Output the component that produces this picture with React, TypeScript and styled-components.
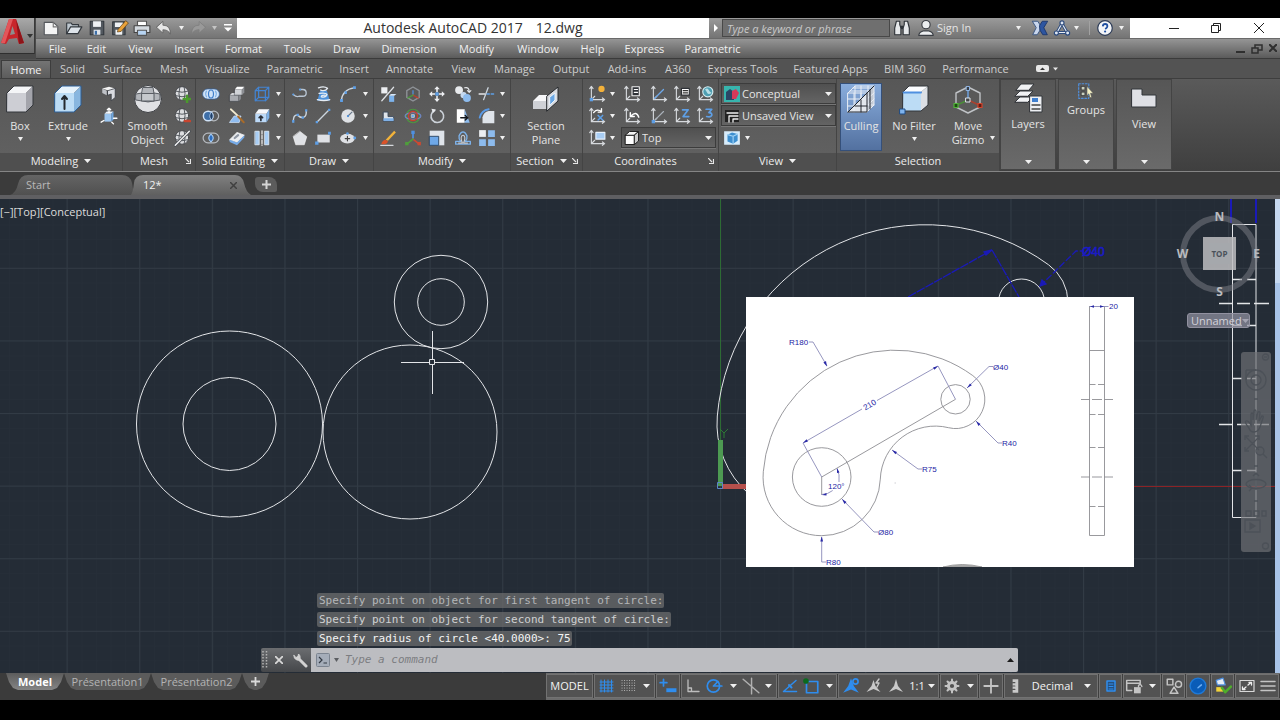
import React from "react";
import styled, { createGlobalStyle, css } from "styled-components";

const Global = createGlobalStyle`
  * { box-sizing: border-box; }
  body { margin: 0; background: #000; font-family: "Open Sans", "Noto Sans", sans-serif; font-size: 11px; line-height: 14px; color: #e4e4e4; }
  button, input, select { font: inherit; color: inherit; border: 0; margin: 0; padding: 0; background: none; border-radius: 0; }
  svg { display: block; flex: none; }
`;

/* ---------- frame ---------- */

const Frame = styled.div`
  min-height: 100vh;
  padding: 18px 0 20px;
  display: flex;
  flex-direction: column;
  overflow: hidden;
`;

const Header = styled.header`
  display: flex;
  background: #4a4a4a;
`;

const AppButton = styled.button`
  width: 35px;
  height: 36px;
  margin-right: 1px;
  flex: none;
  display: flex;
  align-items: center;
  background: linear-gradient(#a9a9a9, #6a6a6a);
  border-bottom: 1px solid #2f2f2f;
  border-right: 1px solid #3a3a3a;
`;

const HeaderRows = styled.div`
  flex: 1;
  min-width: 0;
`;

const TitleBar = styled.div`
  height: 20px;
  display: flex;
  background: #fff;
`;

const barTone = css`
  background: linear-gradient(#9a9a9a, #747474);
  display: flex;
  align-items: center;
`;

const QuickBar = styled.div`
  ${barTone}
  width: 201px;
  flex: none;
  padding-left: 4px;
`;

const Cell = styled.button<{ $w: number }>`
  width: ${(p) => p.$w}px;
  height: 100%;
  flex: none;
  display: flex;
  align-items: center;
  justify-content: center;
  gap: 3px;
`;

const WindowTitle = styled.h1`
  flex: 1;
  margin: 0;
  display: flex;
  justify-content: center;
  align-items: center;
  gap: 13px;
  font-size: 14px;
  line-height: 20px;
  font-weight: 400;
  color: #333;
  white-space: nowrap;
`;

const InfoBar = styled.div`
  ${barTone}
  flex: none;
`;

const Divider = styled.span`
  width: 1px;
  height: 14px;
  margin: 0 7px 0 8px;
  background: #a2a2a2;
`;

const Search = styled.input`
  width: 168px;
  height: 18px;
  padding: 0 4px;
  background: #6f6f6f;
  border: 1px solid #484848;
  font-style: italic;
  &::placeholder { color: #c9c9c9; opacity: 1; }
`;

const SignIn = styled.button`
  display: flex;
  align-items: center;
  justify-content: space-between;
  width: 84px;
  margin-right: 8px;
  text-align: left;
`;

const WindowButtons = styled.div`
  width: 150px;
  display: flex;
  padding-left: 22px;
`;

const MenuBar = styled.nav`
  height: 21px;
  display: flex;
  align-items: center;
  padding-left: 3px;
  background: linear-gradient(#959595, #5b5b5b);
  border-bottom: 1px solid #3b3b3b;
  border-top: 1px solid #6a6a6a;
`;

const MenuItem = styled.button<{ $w: number }>`
  width: ${(p) => p.$w}px;
  text-align: center;
  white-space: nowrap;
  flex: none;
  color: #f0f0f0;
`;

const MdiButtons = styled.div`
  margin-left: auto;
  display: flex;
  gap: 1px;
`;

const TabRow = styled.nav`
  height: 20px;
  display: flex;
  align-items: flex-end;
  background: #535353;
  border-bottom: 1px solid #3e3e3e;
  padding-left: 1px;
`;

const RibbonTab = styled.button<{ $w: number; $active?: boolean }>`
  width: ${(p) => p.$w}px;
  height: 18px;
  white-space: nowrap;
  flex: none;
  color: #cdcdcd;
  ${(p) =>
    p.$active &&
    css`
      color: #f2f2f2;
      background: linear-gradient(#747474, #5c5c5c);
      border: 1px solid #3d3d3d;
      border-bottom: 0;
    `}
`;

/* ---------- ribbon ---------- */

const Ribbon = styled.div`
  height: 93px;
  display: flex;
  background: linear-gradient(#5a5a5a, #3f3f3f);
  border-bottom: 1px solid #858585;
`;

const PanelBox = styled.section<{ $w: number }>`
  width: ${(p) => p.$w}px;
  flex: none;
  display: flex;
  flex-direction: column;
  border-right: 1px solid #444;
  box-shadow: inset -1px 0 #6a6a6a;
`;

const PanelBody = styled.div<{ $pad: number }>`
  height: 74px;
  padding: 4px 0 0 ${(p) => p.$pad}px;
  display: flex;
  background: linear-gradient(#575757, #606060);
`;

const PanelFoot = styled.div`
  flex: 1;
  display: flex;
  align-items: center;
  padding-bottom: 2px;
  background: #4f4f4f;
  color: #ececec;
  white-space: nowrap;
`;

const FootLabel = styled.span`
  flex: 1;
  display: flex;
  align-items: center;
  justify-content: center;
  gap: 6px;
`;

const Launcher = styled.button`
  margin-right: 4px;
`;

const BigButton = styled.button<{ $w: number; $active?: boolean }>`
  width: ${(p) => p.$w}px;
  height: 68px;
  flex: none;
  display: flex;
  flex-direction: column;
  align-items: center;
  text-align: center;
  white-space: pre;
  gap: 4px;
  ${(p) =>
    p.$active &&
    css`
      background: linear-gradient(#89addd, #52709f);
      box-shadow: inset 0 0 0 1px #35507a;
    `}
`;

const Tools = styled.div<{ $cols: string }>`
  display: grid;
  grid-template-columns: ${(p) => p.$cols};
  grid-auto-rows: 22px;
  align-items: start;
`;

const Tool = styled.button`
  height: 22px;
  display: flex;
  align-items: center;
  justify-content: center;
`;

const ViewStack = styled.div`
  display: flex;
  flex-direction: column;
  gap: 1px;
`;

const Combo = styled.label<{ $w: number }>`
  width: ${(p) => p.$w}px;
  height: 21px;
  display: flex;
  align-items: center;
  gap: 2px;
  padding: 0 3px 0 2px;
  background: linear-gradient(#505050, #646464);
  border: 1px solid #3c3c3c;
  box-shadow: 0 1px #767676;
`;

const ComboSelect = styled.select`
  appearance: none;
  flex: 1;
  min-width: 0;
  outline: 0;
`;

const Spanned = styled.div`
  grid-column: span 4;
  padding-left: 5px;
`;

const Flyout = styled.button`
  width: 56px;
  height: 91px;
  margin-right: 2px;
  flex: none;
  display: flex;
  flex-direction: column;
  align-items: center;
  padding: 2px 0 5px;
  gap: 3px;
  background: linear-gradient(#565656, #6a6a6a);
  border: 1px solid #444;
  & > :last-child { margin-top: auto; }
`;

/* ---------- document tabs ---------- */

const DocTabs = styled.nav`
  height: 27px;
  display: flex;
  align-items: flex-end;
  padding: 0 0 0 10px;
  background: #3b3b3b;
  border-bottom: 4px solid #5f5f62;
`;

const DocTab = styled.button<{ $active?: boolean }>`
  width: ${(p) => (p.$active ? 120 : 124)}px;
  height: 20px;
  flex: none;
  display: flex;
  align-items: center;
  justify-content: space-between;
  padding: 0 ${(p) => (p.$active ? 14 : 28)}px 0 ${(p) => (p.$active ? 12 : 16)}px;
  margin-left: ${(p) => (p.$active ? -3 : 0)}px;
  color: ${(p) => (p.$active ? "#f0f0f0" : "#b9b9b9")};
  background: ${(p) => (p.$active ? "linear-gradient(#808080, #606060)" : "linear-gradient(#646464, #505050)")};
  clip-path: ${(p) =>
    p.$active
      ? 'path("M0 20 Q2 17 3 8 Q4 0 12 0 H104 Q111 0 113 8 Q115 17 120 20 Z")'
      : 'path("M0 20 Q6 18 8 9 Q10 0 18 0 H112 Q120 0 122 8 L124 20 Z")'};
`;

const AddDoc = styled.button`
  width: 22px;
  height: 15px;
  margin: 0 0 3px 4px;
  display: flex;
  align-items: center;
  justify-content: center;
  background: #5c5c5c;
  border-radius: 3px 8px 2px 8px;
`;

/* ---------- drawing area ---------- */

const Canvas = styled.main`
  flex: 1;
  min-height: 474px;
  position: relative;
  overflow: hidden;
  display: flex;
  background: #242c36;
`;

const ModelSpace = styled.svg`
  flex: 1;
  min-width: 0;
  align-self: stretch;
`;

const Scroll = styled.div`
  width: 5px;
  background: linear-gradient(#c6d8f0 0 84px, #a9c4e8 84px);
`;

const ViewLabel = styled.div`
  position: absolute;
  left: 0;
  top: 6px;
  color: #dcdcdc;
`;

const SheetPane = styled.figure`
  position: absolute;
  left: 746px;
  top: 98px;
  margin: 0;
  background: #fff;
`;

const NavCube = styled.div`
  position: absolute;
  right: 17px;
  top: 8px;
`;

const UcsName = styled.button`
  position: absolute;
  right: 30px;
  top: 114px;
  width: 63px;
  height: 15px;
  display: flex;
  align-items: center;
  justify-content: space-between;
  padding: 0 4px 0 3px;
  border: 1px solid #9191a0;
  border-radius: 3px;
  background: rgba(148, 148, 164, 0.7);
  color: #d2d2da;
`;

const NavBar = styled.div`
  position: absolute;
  right: 9px;
  top: 153px;
  border-radius: 3px;
  background: rgba(112, 114, 118, 0.68);
`;

const History = styled.div`
  position: absolute;
  left: 317px;
  bottom: 27px;
  display: flex;
  flex-direction: column;
  align-items: flex-start;
  gap: 4px;
  font-family: "DejaVu Sans Mono", monospace;
`;

const Line = styled.div<{ $tone: string }>`
  padding: 0 1px 0 2px;
  height: 15px;
  line-height: 15px;
  border-radius: 2px;
  background: rgba(112, 112, 112, 0.7);
  color: ${(p) => p.$tone};
  white-space: nowrap;
`;

const CommandBar = styled.div`
  position: absolute;
  left: 261px;
  bottom: 1px;
  width: 757px;
  height: 24px;
  display: flex;
  align-items: center;
  background: linear-gradient(#6b6d70, #45474a);
  border-radius: 2px;
  overflow: hidden;
`;

const CommandField = styled.label`
  flex: 1;
  align-self: stretch;
  display: flex;
  align-items: center;
  gap: 4px;
  padding: 0 4px 0 5px;
  background: #bcbdc1;
`;

const CommandInput = styled.input`
  flex: 1;
  min-width: 0;
  padding-left: 2px;
  outline: 0;
  font-family: "DejaVu Sans Mono", monospace;
  font-style: italic;
  color: #333;
  &::placeholder { color: #7c7d81; opacity: 1; }
`;

/* ---------- bottom ---------- */

const Bottom = styled.footer`
  height: 27px;
  display: flex;
  justify-content: space-between;
  background: #3b3b3b;
`;

const LayoutTabs = styled.nav`
  display: flex;
  align-items: flex-start;
  padding-left: 6px;
`;

const LayoutTab = styled.button<{ $w: number; $active?: boolean }>`
  width: ${(p) => p.$w}px;
  height: 17px;
  color: ${(p) => (p.$active ? "#fff" : "#b4b4b4")};
  font-weight: ${(p) => (p.$active ? 700 : 400)};
  background: ${(p) => (p.$active ? "linear-gradient(#5c5c5c, #858585)" : "#5b5b5b")};
  clip-path: polygon(0 0, 100% 0, calc(100% - 3px) 9px, calc(100% - 7px) 15px, calc(100% - 12px) 100%, 12px 100%, 7px 15px, 3px 9px);
`;

const Status = styled.div`
  display: flex;
  background: #3f3f3f;
  border-top: 1px solid #6c6c6c;
  border-bottom: 2px solid #6c6c6c;
`;

const Group = styled.div`
  display: flex;
  border: 1px solid #727272;
  background: #525252;
  margin-right: 1px;
  color: #f2f2f2;
`;

/* ---------- small parts ---------- */

const Caret = ({ w = 7, c = "#f0f0f0", up = false }: { w?: number; c?: string; up?: boolean }) => (
  <svg width={w} height={4} viewBox="0 0 8 4" preserveAspectRatio="none">
    <path d={up ? "M0 4h8L4 0z" : "M0 0h8L4 4z"} fill={c} />
  </svg>
);

const Ico = ({ s = 18, v = 16, children }: { s?: number; v?: number; children: React.ReactNode }) => (
  <svg width={s} height={s} viewBox={`0 0 ${v} ${v}`} fill="none" strokeLinecap="round" strokeLinejoin="round">
    {children}
  </svg>
);

const W = "#d6d9dd";
const B = "#9cc6f0";
const K = "#5e9fe6";
const D = "#2b3038";

const Sphere = ({ children }: { children?: React.ReactNode }) => (
  <Ico>
    <circle cx="8" cy="7.5" r="6" fill="#dcdde0" stroke="#3d3f43" strokeWidth=".7" />
    <path d="M2.5 5.5q5.5 2 11 0M2.5 9.5q5.5 2 11 0M6 2q-1.5 5.5 0 11M10 2q1.5 5.5 0 11" stroke="#4b4f55" strokeWidth=".8" />
    {children}
  </Ico>
);

const Axes = ({ children }: { children?: React.ReactNode }) => (
  <Ico>
    <path d="M3 1.5V13h11.5M1.5 3.2 3 1.2l1.5 2M12.8 11.5l2 1.5-2 1.5M3 13l3-3" stroke={W} strokeWidth="1" />
    {children}
  </Ico>
);

const icons: Record<string, React.ReactNode> = {
  polysolid: <Ico><path d="M2 3l6-1.500 5.500 1.500L8 5z" fill="#f3f3f3" /><path d="M2 3v4l4 2V5z" fill="#bfc2c7" /><path d="M7 5l6.500-2v8L10 14V8L7 9z" fill="#d9dbe0" stroke={D} strokeWidth=".6" /></Ico>,
  presspull: <Ico><path d="M4 6h6v7H4z" fill={B} /><path d="M4 6l2-2h6l-2 2z" fill="#e8f2fd" /><path d="M10 6l2-2v7l-2 2z" fill="#6fa6de" /><path d="M8 5V1M6.500 2.500 8 1l1.500 1.500M12 10h3M1 13.500l2.500-1.500M10.500 13.500l1.500 1.500" stroke="#fff" strokeWidth="1.200" /></Ico>,
  meshAdd: <Sphere><path d="M12.500 9.500v6M9.500 12.500h6" stroke="#4a9a2c" strokeWidth="2.200" /></Sphere>,
  meshSub: <Sphere><path d="M10.500 12.500h4.500" stroke="#c8452f" strokeWidth="2.200" /></Sphere>,
  meshOff: <Sphere><path d="M2 14.500 14.500 2" stroke="#4b4f55" strokeWidth="2.600" /><path d="M2 14.500 14.500 2" stroke="#f5f5f5" strokeWidth="1.200" /></Sphere>,
  union: <Ico><path d="M5 3.500a4.500 4.500 0 1 0 0 9h6a4.500 4.500 0 0 0 0-9z" fill="#cfe2f7" stroke="#2f5f9e" strokeWidth=".6" /><ellipse cx="8" cy="8" rx="2.200" ry="3.600" stroke="#3c7cc9" /><path d="M4 5.500q-1.500 2 0 5M12 5.500q1.500 2 0 5" stroke="#7db0e6" /></Ico>,
  subtract: <Ico><circle cx="10.500" cy="8" r="4.300" stroke="#b6babf" strokeWidth="1.100" /><circle cx="5.500" cy="8" r="4.300" stroke="#cfe2f7" strokeWidth="1.300" fill="#3e6fa8" /><path d="M8.500 4.500q-3.500 3.500 0 7 3-3.500 0-7z" fill="#1f3f68" stroke="#b9d4f2" strokeWidth=".7" /></Ico>,
  intersect: <Ico><rect x="1" y="3.700" width="14" height="8.600" rx="4.300" stroke="#b6babf" strokeWidth="1.100" /><path d="M8 4.500q-4 3.500 0 7 4-3.500 0-7z" fill="#2b6dc0" stroke="#a7cdf5" /></Ico>,
  extrudeFace: <Ico><path d="M1.500 9h8v5.500h-8z" fill="#a9acb1" stroke={D} strokeWidth=".4" /><path d="M1.500 9l2-2h8l-2 2z" fill="#d4d6d9" /><path d="M9.500 9l2-2v5.500l-2 2z" fill="#85888d" /><path d="M6 4h6.500v5H6z" fill="#d0d3d7" stroke={D} strokeWidth=".4" /><path d="M6 4l2-2.500h6.500l-2 2.500z" fill="#fff" /><path d="M12.500 4l2-2.500v5l-2 2.500z" fill="#8e9196" /></Ico>,
  slice: <Ico><path d="M1.500 13.500l4-5.500h6l-1.500 5.500z" fill="#8fbcf0" stroke="#cfe3fa" strokeWidth=".7" /><path d="M2.500 2l7 6.500" stroke="#f2ead0" strokeWidth="1.600" /><path d="M9 8.500l5 5" stroke="#a86b2a" strokeWidth="1.800" /></Ico>,
  thicken: <Ico><path d="M1.500 9.500 8 3l6.500 2.500L8 12z" fill="#eceef2" stroke="#fff" strokeWidth=".6" /><path d="M1.500 9.500 8 12l6.500-6.500v2L8 14.500l-6.500-3z" fill="#76abe8" /><path d="M6 8l3-2.500" stroke="#8f97a3" strokeWidth="2" /></Ico>,
  edges: <Ico><path d="M2 5h9v9H2zM5 2h9v9H5zM2 5l3-3M11 5l3-3M2 14l3-3M11 14l3-3" stroke="#4384d2" strokeWidth="1.100" /></Ico>,
  imprint: <Ico><path d="M2 6h10v7.500H2z" fill="#bcd9f7" /><path d="M2 6l3-4h9.500L12 6z" fill="#f7f9fc" /><path d="M12 6l2.500-4v7.500l-2.500 4z" fill="#7fb1e6" /><path d="M7 12V8M5.500 9.500 7 8l1.500 1.500" stroke={D} strokeWidth="1.500" /></Ico>,
  separate: <Ico><path d="M2 2h3.500v12H2zM10.500 2H14v12h-3.500z" fill="#a8cdf4" stroke="#e8f2fd" strokeWidth=".7" /><path d="M8 1.500v13" stroke="#fff" strokeDasharray="3 1.200" /></Ico>,
  polyline: <Ico><path d="M2 8.500q3 2.500 5 1.500h3.500a3 3 0 0 0 0-6H8" stroke="#b9c6d4" strokeWidth="1.200" /><circle cx="2" cy="8.500" r=".9" fill={K} /><circle cx="8" cy="4" r="1" fill={K} /></Ico>,
  helix: <Ico><path d="M3 14h11L11.500 5h-6z" fill="#4f93dc" /><path d="M4 2.500q5-2 8 .5-2 3-6 1.500M4.500 7.500q6-1 7 1-1 3-5 2 0-1.500 3-1.500M3 13q6 1.500 11 0" stroke="#e6ecf3" strokeWidth="1.200" /></Ico>,
  arc: <Ico><path d="M2 14Q3 4 13.500 2.500" stroke="#ccd5de" strokeWidth="1.200" /><path d="M1 12.500h2.500V15H1zM5 5.500h2V8H5zM12.500 1H15v2.500h-2.500z" fill={K} /></Ico>,
  spline: <Ico><path d="M2 13q0-6 3.500-6 3 3 6 2Q14 8 13.500 3" stroke="#ccd5de" strokeWidth="1.300" /><path d="M1 11.500h2V14H1zM5 6h2v2H5zM9.500 8.500h2v2h-2zM12.500 2h2v2h-2z" fill={K} /></Ico>,
  line: <Ico><path d="M2.500 13.500l11-11" stroke="#ccd5de" strokeWidth="1.200" /><path d="M1.500 12.500h2v2h-2zM12.500 1.500h2v2h-2z" fill={K} /></Ico>,
  circle: <Ico><circle cx="8" cy="8" r="6" fill="#dfe2e6" /><path d="M8 8l3.500-3.500" stroke="#69788a" /><circle cx="8" cy="8" r="1" fill="#4d8fd9" /></Ico>,
  polygon: <Ico><path d="M8 2.200 14 6.800 11.800 14H4.200L2 6.800z" fill="#dfe1e5" stroke="#fff" strokeWidth=".5" /></Ico>,
  rect: <Ico><path d="M3 5h11v7H3z" fill="#dfe1e5" /><path d="M1 11h3v3H1zM12.500 2.500H15V5h-2.500z" fill={K} /></Ico>,
  ellipse: <Ico><ellipse cx="7.500" cy="8.500" rx="6.500" ry="4.300" fill="#dfe1e5" /><path d="M7.500 6.500v4M5.500 8.500h4" stroke="#444" /><circle cx="14" cy="8" r="1.300" fill={K} /><circle cx="7.500" cy="4" r="1.200" fill={K} /></Ico>,
  move3: <Ico><path d="M2 2h5.500v5.500H2z" fill="#eceef1" /><path d="M9 9.500h4.500V15H9z" fill="#7db3ec" /><path d="M9 9.500 10.500 8H15.500L13.500 9.500z" fill="#d5e7fb" /><path d="M2.500 14 13 2" stroke="#dfe2e6" strokeWidth="1.100" /></Ico>,
  gizmoRing: <Ico><path d="M8 1.800 13.500 5v6L8 14.200 2.500 11V5z" stroke="#8f9398" strokeWidth="1.200" /><path d="M8 5v4" stroke="#4f90e0" strokeWidth="1.100" /><path d="M8 9l4.500 2.500" stroke="#b8402f" strokeWidth="1.300" /><path d="M8 9l-4.500 2.500" stroke="#4b963c" strokeWidth="1.300" /></Ico>,
  move: <Ico><path d="M8 1l2.500 2.700h-5zM8 15l2.500-2.700h-5zM1 8l2.700-2.500v5zM15 8l-2.700-2.500v5z" fill="#eef0f3" /><path d="M8 3.500v2.500M8 10v2.500M3.500 8H6M10 8h2.500" stroke="#eef0f3" strokeWidth="1.400" /><path d="M6.500 6.500h3v3h-3z" fill={K} /></Ico>,
  copy: <Ico><circle cx="4.500" cy="4.500" r="3.500" fill="#e8eaed" /><circle cx="8.500" cy="9" r="2.700" fill="#c6d9ef" /><circle cx="11.500" cy="11.500" r="3.500" fill="#8dbbed" /><path d="M9.500 2.500q4-1 4 3.500M12 5l1.500 1.500L15 5" stroke="#e8eaed" /></Ico>,
  trim: <Ico><path d="M1 8h5" stroke="#e3e5e8" strokeWidth="1.200" /><path d="M8 8h7.500" stroke="#5e9fe6" strokeWidth="1.400" strokeDasharray="2 1.800" /><path d="M5 13 9 2.500" stroke="#ccd5de" strokeWidth="1.200" /></Ico>,
  solidL: <Ico><path d="M4 4.500h4v4h5v4H4z" fill="#dfe4ea" stroke="#3a4a5e" strokeWidth=".8" /><path d="M4 10h9v2.500H4z" fill="#7fb0e6" /></Ico>,
  rotate3: <Ico><circle cx="8" cy="8" r="6" stroke="#4f9440" strokeWidth="1.100" /><ellipse cx="8" cy="8" rx="7" ry="3" stroke="#6f86c2" strokeWidth="1.100" /><circle cx="8" cy="8" r="4" stroke="#c8432e" strokeWidth="1.300" /><path d="M6.800 6.800h2.400v2.400H6.800z" fill="#5ea2ee" stroke="#fff" strokeWidth=".5" /></Ico>,
  rotate: <Ico><path d="M11 3.300a5.600 5.600 0 1 1-5-.2" stroke="#ccd2d9" strokeWidth="1.400" /><path d="M3 1.500l4 .8-2.500 3z" fill="#e8eaed" /></Ico>,
  stretch: <Ico><path d="M2.500 2h7v12h-7z" fill="#fff" /><path d="M9.500 2l4.500 12H9.500z" fill="#8dbbed" /><path d="M6 9.500h6M10 7.500l2.200 2-2.200 2" stroke="#16181b" strokeWidth="1.300" /></Ico>,
  fillet: <Ico><path d="M4 14.500V9q1-4.500 5.500-5.500h5v11z" fill="#dfe4ea" /><path d="M1.500 9.500Q3 3 9.500 2" stroke="#5a9be8" strokeWidth="1.600" /></Ico>,
  erase: <Ico><path d="M1.500 14.500h11" stroke="#d5d8dc" /><path d="M6 9.500 13.500 1.500 15 3 8 10.500z" fill="#f2b33a" /><path d="M2 13.500q1-4 4-4l2 1.500q-1 3-6 2.500z" fill="#d9532a" /></Ico>,
  scale3: <Ico><path d="M8 9V3" stroke="#4f90e0" strokeWidth="1.500" /><path d="M8 9l5 4" stroke="#cc4a32" strokeWidth="1.500" /><path d="M8 9l-5 4" stroke="#4f9e3c" strokeWidth="1.500" /><path d="M6.500 1.500h3v3h-3z" fill="#4f90e0" /><path d="M12 11.500h3v3h-3z" fill="#cc4a32" /><path d="M1 11.500h3v3H1z" fill="#4f9e3c" /></Ico>,
  scale: <Ico><path d="M1.500 1.500h13v13h-13z" fill="#dfe4ea" /><path d="M1.500 6.500h8v8h-8z" fill="#6ea8e8" stroke="#27415f" strokeWidth=".8" /></Ico>,
  offset: <Ico><path d="M1.500 13.500V11H6q-2-2-1.500-5Q6 2.500 8 2.500T11.500 6q.5 3-1.500 5h4.500v2.500z" stroke="#7db3ec" strokeWidth="1.200" /><path d="M4 12.500h3.500Q5.500 8 7 6q1-1 2 0 1.500 2-.5 6.500H12" stroke="#c8ccd2" /></Ico>,
  array: <Ico><path d="M1 1h6v6H1z" fill="#eceef1" /><path d="M9 1h6v6H9zM1 9h6v6H1zM9 9h6v6H9z" fill="#8dbbed" /></Ico>,
  ucsNew: <Axes><circle cx="12" cy="3.500" r="2.800" fill="#f3b13a" /><path d="M1.500 11.500h3v3h-3z" fill={K} /></Axes>,
  ucsNamed: <Axes><path d="M8 1.500h6.500v8H8z" fill="#2e3136" stroke="#eee" /><path d="M10 4h3M10 6.500h3" stroke="#fff" /></Axes>,
  ucsLine: <Axes><path d="M4 12l8-8" stroke="#6ea8e8" strokeWidth="1.200" /></Axes>,
  ucsFace: <Axes><path d="M7.500 3h7v6h-7z" fill="#fff" stroke="#2e3136" /><path d="M9 5h4M9 7h4" stroke="#333" /></Axes>,
  ucsWorld: <Axes><circle cx="10.500" cy="6" r="4.500" fill="#4f9fb2" stroke="#d8eef2" /><path d="M8 4q2-2 3 0t3 3q-3 2-4 0T8 4z" fill="#b8dfe6" /></Axes>,
  ucsX: <Axes><path d="M5 5q3-4 7-1M12 1.500V4.500H9" stroke="#fff" strokeWidth="1.200" /><path d="M9 7.500l4 4M13 7.500l-4 4" stroke={K} strokeWidth="1.400" /></Axes>,
  ucsPrev: <Axes><path d="M7 8q5-5 7 1M6.500 5v3.500H10" stroke="#fff" strokeWidth="1.300" /></Axes>,
  ucsPoint: <Axes><path d="M5 11l7-7" stroke="#aab2bb" /><path d="M1.500 11.500h3v3h-3z" fill={K} /></Axes>,
  ucsZ: <Axes><path d="M8.500 2.500h5L9 8.500h5" stroke={K} strokeWidth="1.500" /></Axes>,
  ucs3: <Axes><path d="M9 2h5l-2.500 3q3 0 2.500 2.500-1 2-4.500 1" stroke={K} strokeWidth="1.500" /></Axes>,
  ucsView: <Axes><path d="M7 3h8v6H7z" fill="#a8cdf4" stroke="#e8f2fd" /></Axes>,
  cubeView: <Ico><path d="M1 2h14v12H1z" fill="#d7ecfb" /><path d="M4 5l4-2 5 1.500v6L9 13l-5-2z" fill="#3d8fd0" /><path d="M4 5l5 1.500V13M9 6.500l4-2" stroke="#9fd2f5" /></Ico>,
};

const bigIcons: Record<string, React.ReactNode> = {
  box: <Ico s={32} v={32}><path d="M3 10h19v19H3z" fill="#cdced4" /><path d="M3 10l7-7h19l-7 7z" fill="#f4f5f7" /><path d="M22 10l7-7v19l-7 7z" fill="#a3a4ab" /><path d="M3 10l7-7h19v19l-7 7H3z" stroke="#33363b" /></Ico>,
  extrude: <Ico s={32} v={32}><path d="M3 10h19v19H3z" fill="#bcdcf5" /><path d="M3 10l7-7h19l-7 7z" fill="#e7f3fc" /><path d="M22 10l7-7v19l-7 7z" fill="#88b6df" /><path d="M3 10l7-7h19v19l-7 7H3z" stroke="#2c5f96" /><path d="M12.500 26V14M10 16l2.500-3 2.500 3" stroke="#24292f" strokeWidth="2" /></Ico>,
  smooth: <Ico s={32} v={32}><circle cx="16" cy="16" r="13.500" fill="#e0e1e4" stroke="#3d3f43" /><path d="M11 4.500h10l1 6H10zM4 11l6-1v8l-6-1zM22 10l6 1v6l-6 1zM10 18q6 2 12 0" fill="#b3b6bb" stroke="#5a5e64" /><path d="M10 10.500h12V18H10z" fill="#c6c9cd" stroke="#5a5e64" /></Ico>,
  section: <Ico s={32} v={32}><path d="M3 18l6-6h11l-4 6z" fill="#f7f7f9" /><path d="M3 18h14v8H3z" fill="#cfd1d6" /><path d="M17 13 28 4v14L17 28z" fill="#d9dbe0" stroke="#25282c" /><path d="M20 14l5-4v7l-5 5z" fill="#6aa7e4" stroke="#eaf3fc" /></Ico>,
  culling: <Ico s={32} v={32}><path d="M3 29 22 10v19z" fill="#e2e6ec" /><path d="M22 10l7-7v19l-7 7z" fill="#c3cad4" /><path d="M3 10h19v19H3zM3 10l7-7h19l-7 7M29 3v19l-7 7M9 10v19M16 10v19M3 16h19M3 23h19M10 3v19h19M16 3v19M23 3v19M22 16l7-6M22 23l7-7M5 8h19M8 5h19" stroke="#e9eef6" strokeWidth="1" /><path d="M3 29 22 10M22 10v19H3M22 10l7-7M25 7v19M16 17v12M10 23h12" stroke="#20252c" strokeWidth="1" /></Ico>,
  filter: <Ico s={32} v={32}><path d="M5 9h18v19H5z" fill="#bcdcf5" /><path d="M5 9l6-6h19l-7 6z" fill="#fbfcfe" /><path d="M23 9l7-6v19l-7 6z" fill="#dcdfe4" /><path d="M5 9l6-6h19v19l-7 6H5z" stroke="#33363b" /><path d="M5.500 9.500H23" stroke="#4f90e0" strokeWidth="2" /><path d="M2 26h5v5H2z" fill="#7fb4ee" stroke="#1f4d86" /></Ico>,
  gizmo: <Ico s={32} v={32}><path d="M16 4l12 6v14l-12 6-12-6V10z" stroke="#bfc2c6" strokeWidth="1.400" /><path d="M16 17V6" stroke="#6d9fdc" strokeWidth="1.500" /><path d="M16 17l11 5" stroke="#a8412f" strokeWidth="1.600" /><path d="M16 17 5 22" stroke="#4a8c38" strokeWidth="1.600" /><path d="M14.500 3.500h3v4h-3z" fill="#3a3f46" stroke="#8fb4e2" /><path d="M14 15h4v4h-4z" fill="#444" stroke="#dfe6ee" /><path d="M26 20.500h4v4h-4z" fill="#5e1c12" stroke="#d2452e" strokeWidth="1.200" /><path d="M2 20.500h4v4H2z" fill="#1d4d12" stroke="#52b43a" strokeWidth="1.200" /></Ico>,
  layers: <Ico s={32} v={32}><path d="M3 20l5-5h13l-5 5zM3 14l5-5h13l-5 5zM4 8l5-6h13l-5 6z" fill="#f2f3f5" stroke="#33363b" /><path d="M18 14h12v16H18z" fill="#eef0f3" stroke="#33363b" /><path d="M20 16h6v4h-6z" fill="#3f7fce" /><path d="M20 23h8M20 27h8" stroke="#444" strokeWidth="1.400" /></Ico>,
  groups: <Ico s={18}><path d="M1.500 1.500h9v13h-9z" stroke="#4f90e0" strokeDasharray="1.500 1.500" /><path d="M4 4h3v3H4zM4 9h3v3H4z" fill="#c9d0c0" stroke="#333" strokeWidth=".6" /><path d="M9 4l5.500 6H12l1 3.500-1.500.5-1-3.500L9 12z" fill="#f3efc4" stroke="#555" strokeWidth=".5" /></Ico>,
  view: <Ico s={32} v={32}><path d="M4 7h10v6h14v12H4z" fill="#dfe0e5" stroke="#33363b" /></Ico>,
};

const Row = ({ names, caret }: { names: string[]; caret?: boolean }) => (
  <>
    {names.map((n) => (
      <Tool key={n} aria-label={n}>{icons[n]}</Tool>
    ))}
    {caret && <Tool aria-label="More"><Caret w={5} /></Tool>}
  </>
);

const Foot = ({ label, caret, launch }: { label: string; caret?: boolean; launch?: boolean }) => (
  <PanelFoot>
    <FootLabel>{label}{caret && <Caret />}</FootLabel>
    {launch && (
      <Launcher aria-label={`${label} settings`}>
        <svg width="6" height="6" viewBox="0 0 6 6"><path d="M0 0l4 4M5.500 1v4.500H1" stroke="#e8e8e8" strokeWidth="1.200" fill="none" /></svg>
      </Launcher>
    )}
  </PanelFoot>
);

const Big = ({ w, icon, text, caret, active }: { w: number; icon: string; text: string; caret?: boolean; active?: boolean }) => (
  <BigButton $w={w} $active={active}>
    {bigIcons[icon]}
    <span>{text}</span>
    {caret && <Caret w={5} />}
  </BigButton>
);

const menus: [string, number][] = [["File", 37], ["Edit", 41], ["View", 47], ["Insert", 50], ["Format", 59], ["Tools", 49], ["Draw", 49], ["Dimension", 76], ["Modify", 59], ["Window", 64], ["Help", 45], ["Express", 59], ["Parametric", 77]];
const tabs: [string, number][] = [["Solid", 24], ["Surface", 38], ["Mesh", 27], ["Visualize", 42], ["Parametric", 54], ["Insert", 27], ["Annotate", 46], ["View", 24], ["Manage", 40], ["Output", 35], ["Add-ins", 39], ["A360", 25], ["Express Tools", 66], ["Featured Apps", 72], ["BIM 360", 39], ["Performance", 64]];

const blue = "#2f8dee";

const TitleArea = () => (
  <Header>
    <AppButton aria-label="Application menu">
      <svg width="34" height="34" viewBox="0 0 34 34">
        <path d="M9 0h7l8 24-5 1-2-6-8 1-3 5-5-1z" fill="#c8252b" />
        <path d="M12.500 7l2.500 8-5 1z" fill="#8e8e8e" />
        <path d="M9 0h4L5 24l-4 0z" fill="#e2565a" />
        <path d="M16 0l8 24-5 1z" fill="#8d1419" />
        <path d="M27 15h6l-3 4z" fill="#333" />
      </svg>
    </AppButton>
    <HeaderRows>
      <TitleBar>
        <QuickBar>
          <Cell $w={22} aria-label="New"><Ico><path d="M2 3h8l4 3.500V14H2z" fill="#f4f4f4" stroke="#55585c" /><path d="M10 3v4h4" stroke="#777" /></Ico></Cell>
          <Cell $w={23} aria-label="Open"><Ico><path d="M1.500 13V3.500h4l1 1.500H12v2" fill="#bfc8d0" stroke="#33383e" /><path d="M1.500 13 5 7h10l-3.500 6z" fill="#dde3e9" stroke="#33383e" /></Ico></Cell>
          <Cell $w={23} aria-label="Save"><Ico><path d="M2 2h12v12H2z" fill="#52585f" stroke="#33383e" /><path d="M4.500 2h7v5h-7z" fill="#eef1f4" /><path d="M5 9.500h6V14H5z" fill="#dfe4ea" /><path d="M6 10.500h2V14H6z" fill="#3c6fa8" /></Ico></Cell>
          <Cell $w={23} aria-label="Save as"><Ico><path d="M1.500 2.500h11V14h-11z" fill="#52585f" stroke="#33383e" /><path d="M3.500 3h7v4h-7zM4 9.500h6V14H4z" fill="#eef1f4" /><path d="M6.500 9 13 1.500 15.500 3.500 9 11l-3 .5z" fill="#e8a13a" stroke="#5a3b12" strokeWidth=".6" /></Ico></Cell>
          <Cell $w={22} aria-label="Plot"><Ico><path d="M4 2h8v4H4z" fill="#fff" stroke="#555" /><path d="M1 6h14v6H1z" fill="#d4dae0" stroke="#444" /><path d="M4 10h8v4.500H4z" fill="#b7d4f2" stroke="#555" /></Ico></Cell>
          <Cell $w={22} aria-label="Undo"><Ico><path d="M7 2.500v3q7 0 6.500 8-1.500-4-6.500-4v3L1.500 7.500z" fill="#e6e6e6" stroke="#555" strokeWidth=".6" /></Ico></Cell>
          <Cell $w={12} aria-label="Undo list"><Caret w={5} /></Cell>
          <Cell $w={22} aria-label="Redo"><Ico><path d="M9 2.500v3q-7 0-6.500 8 1.500-4 6.500-4v3l5.500-5z" fill="#999" stroke="#7c7c7c" strokeWidth=".6" /></Ico></Cell>
          <Cell $w={11} aria-label="Redo list"><Caret w={5} c="#c4c4c4" /></Cell>
          <Cell $w={16} aria-label="Customize"><svg width="8" height="8" viewBox="0 0 8 8"><path d="M0 0h8v1.500H0zM0 3.500h8L4 7.500z" fill="#fff" /></svg></Cell>
        </QuickBar>
        <WindowTitle><span>Autodesk AutoCAD 2017</span><span>12.dwg</span></WindowTitle>
        <InfoBar>
          <Cell $w={13} aria-label="Expand"><svg width="4" height="8" viewBox="0 0 4 8"><path d="M0 0v8l4-4z" fill="#fff" /></svg></Cell>
          <Search placeholder="Type a keyword or phrase" aria-label="Search" />
          <Cell $w={24} aria-label="Find"><Ico><path d="M3 2h3v3l1 3v6H1.500V8zM13 2h-3v3L9 8v6h5.500V8z" fill="#e6e8ea" stroke="#2f3338" /><path d="M7 6h2v3H7z" fill="#2f3338" /></Ico></Cell>
          <Cell $w={23} aria-label="Account"><Ico><circle cx="8" cy="5" r="3.700" fill="#eceef0" stroke="#3a3e44" /><path d="M1.500 14.500q.5-3 4.500-4h4q4 1 4.500 4z" fill="#eceef0" stroke="#3a3e44" /></Ico></Cell>
          <SignIn><span>Sign In</span><Caret w={5} /></SignIn>
          <Cell $w={22} aria-label="Exchange"><Ico><path d="M1.500 2H6l2.500 4L8 10l-2.500 4H1.500L4.500 8z" fill="#c9d6ec" stroke="#33507f" strokeWidth=".8" /><path d="M14.500 2H10L7.500 6 8 10l2.500 4h4L11.500 8z" fill="#2d55a0" stroke="#1b356b" strokeWidth=".8" /></Ico></Cell>
          <Cell $w={21} aria-label="A360"><Ico><path d="M8 4 3.500 12h9z" stroke="#2e4c7e" strokeWidth="2.600" /><path d="M8 4 3.500 12h9z" stroke="#e8edf5" strokeWidth="1" /><circle cx="8" cy="3.500" r="1.800" fill="#dfe7f3" stroke="#2e4c7e" /><circle cx="3" cy="12.500" r="1.800" fill="#dfe7f3" stroke="#2e4c7e" /><circle cx="13" cy="12.500" r="1.800" fill="#dfe7f3" stroke="#2e4c7e" /></Ico></Cell>
          <Cell $w={9} aria-label="A360 menu"><Caret w={5} /></Cell>
          <Divider />
          <Cell $w={16} aria-label="Help"><svg width="16" height="16" viewBox="0 0 16 16"><circle cx="8" cy="8" r="7.300" fill="#f3f5f8" stroke="#2c3b57" strokeWidth="1.200" /><path d="M5.800 6.300Q6 4 8.200 4t2.200 2.200Q10.400 7.500 8.200 9" stroke="#1f4fa0" strokeWidth="1.800" fill="none" /><circle cx="8.100" cy="11.500" r="1.100" fill="#1f4fa0" /></svg></Cell>
          <Cell $w={17} aria-label="Help menu"><Caret w={5} /></Cell>
        </InfoBar>
        <WindowButtons>
          <Cell $w={43} aria-label="Minimize"><svg width="10" height="10"><path d="M0 5.500h10" stroke="#222" /></svg></Cell>
          <Cell $w={42} aria-label="Restore"><svg width="10" height="10" fill="none" stroke="#222"><path d="M.5 2.500h7v7h-7zM2.500 2.500v-2h7v7h-2" /></svg></Cell>
          <Cell $w={43} aria-label="Close"><svg width="10" height="10" stroke="#222"><path d="M0 0l10 10M10 0 0 10" /></svg></Cell>
        </WindowButtons>
      </TitleBar>
      <MenuBar>
        {menus.map(([t, w]) => <MenuItem key={t} $w={w}>{t}</MenuItem>)}
        <MdiButtons>
          <Cell $w={15} aria-label="Minimize drawing"><svg width="10" height="10"><path d="M0 8h9" stroke="#2f2f2f" strokeWidth="2" /></svg></Cell>
          <Cell $w={15} aria-label="Restore drawing"><svg width="12" height="10" fill="none" stroke="#2f2f2f" strokeWidth="1.500"><path d="M1 4h6v5H1zM4 4V1h7v5H7" /></svg></Cell>
          <Cell $w={15} aria-label="Close drawing"><svg width="8" height="8" stroke="#2f2f2f" strokeWidth="2"><path d="M0 0l8 8M8 0 0 8" /></svg></Cell>
        </MdiButtons>
      </MenuBar>
    </HeaderRows>
  </Header>
);

const RibbonArea = () => (
  <Ribbon>
    <PanelBox $w={123}>
      <PanelBody $pad={0}>
        <Big w={40} icon="box" text="Box" caret />
        <Big w={56} icon="extrude" text="Extrude" caret />
        <Tools $cols="26px"><Row names={["polysolid"]} /><Row names={["presspull"]} /></Tools>
      </PanelBody>
      <Foot label="Modeling" caret />
    </PanelBox>
    <PanelBox $w={73}>
      <PanelBody $pad={3}>
        <Big w={43} icon="smooth" text={"Smooth\nObject"} />
        <Tools $cols="26px"><Row names={["meshAdd", "meshSub", "meshOff"]} /></Tools>
      </PanelBody>
      <Foot label="Mesh" launch />
    </PanelBox>
    <PanelBox $w={89}>
      <PanelBody $pad={1}>
        <Tools $cols="27px 26px 24px 8px">
          <Row names={["union", "extrudeFace", "edges"]} caret />
          <Row names={["subtract", "slice", "imprint"]} caret />
          <Row names={["intersect", "thicken", "separate"]} caret />
        </Tools>
      </PanelBody>
      <Foot label="Solid Editing" caret />
    </PanelBox>
    <PanelBox $w={89}>
      <PanelBody $pad={4}>
        <Tools $cols="22px 23px 28px 7px">
          <Row names={["polyline", "helix", "arc"]} caret />
          <Row names={["spline", "line", "circle"]} caret />
          <Row names={["polygon", "rect", "ellipse"]} caret />
        </Tools>
      </PanelBody>
      <Foot label="Draw" caret />
    </PanelBox>
    <PanelBox $w={137}>
      <PanelBody $pad={1}>
        <Tools $cols="26px 24px 23px 29px 20px 10px">
          <Row names={["move3", "gizmoRing", "move", "copy", "trim"]} caret />
          <Row names={["solidL", "rotate3", "rotate", "stretch", "fillet"]} caret />
          <Row names={["erase", "scale3", "scale", "offset", "array"]} caret />
        </Tools>
      </PanelBody>
      <Foot label="Modify" caret />
    </PanelBox>
    <PanelBox $w={72}>
      <PanelBody $pad={10}><Big w={50} icon="section" text={"Section\nPlane"} /></PanelBody>
      <Foot label="Section" caret launch />
    </PanelBox>
    <PanelBox $w={136}>
      <PanelBody $pad={3}>
        <Tools $cols="22px 8px 32px 22px 24px 22px">
          <Row names={["ucsNew"]} caret /><Row names={["ucsNamed", "ucsLine", "ucsFace", "ucsWorld"]} />
          <Row names={["ucsX"]} caret /><Row names={["ucsPrev", "ucsPoint", "ucsZ", "ucs3"]} />
          <Row names={["ucsView"]} caret />
          <Spanned>
            <Combo $w={95}>
              <Ico s={16}><path d="M1.500 5h9v9.500h-9z" fill="#fff" stroke="#222" /><path d="M1.500 5l4-3.500h9L10.500 5z" fill="#f2f2f2" stroke="#222" /><path d="M10.500 5l4-3.500V11l-4 3.500z" fill="#ccc" stroke="#222" /></Ico>
              <ComboSelect aria-label="Coordinate system"><option>Top</option></ComboSelect>
              <Caret />
            </Combo>
          </Spanned>
        </Tools>
      </PanelBody>
      <Foot label="Coordinates" launch />
    </PanelBox>
    <PanelBox $w={118}>
      <PanelBody $pad={2}>
        <ViewStack>
          <Combo $w={115}>
            <Ico s={16}><path d="M0 0h16v16H0z" fill="#37b5ae" /><path d="M2 14V6l4-3 4 3v8z" fill="#2a4665" /><path d="M8 5l4-2 3 4-3 6H8z" fill="#d6395a" /></Ico>
            <ComboSelect aria-label="Visual style"><option>Conceptual</option></ComboSelect>
            <Caret />
          </Combo>
          <Combo $w={115}>
            <Ico s={16}><path d="M1 2h14v12H1z" fill="#222" /><path d="M3 5h11M5 8h9M5 8v6M9 11h5M9 11v3" stroke="#eee" strokeWidth="1.300" /></Ico>
            <ComboSelect aria-label="Named view"><option>Unsaved View</option></ComboSelect>
            <Caret />
          </Combo>
          <Tools $cols="22px 8px"><Row names={["cubeView"]} caret /></Tools>
        </ViewStack>
      </PanelBody>
      <Foot label="View" caret />
    </PanelBox>
    <PanelBox $w={163}>
      <PanelBody $pad={3}>
        <Big w={42} icon="culling" text="Culling" active />
        <Big w={64} icon="filter" text="No Filter" caret />
        <Big w={44} icon="gizmo" text={"Move\nGizmo"} />
        <Tools $cols="5px"><span /><span /><Tool aria-label="Gizmo list"><Caret w={5} /></Tool></Tools>
      </PanelBody>
      <Foot label="Selection" />
    </PanelBox>
    <Flyout>{bigIcons.layers}<span>Layers</span><Caret /></Flyout>
    <Flyout>{bigIcons.groups}<span>Groups</span><Caret /></Flyout>
    <Flyout>{bigIcons.view}<span>View</span><Caret /></Flyout>
  </Ribbon>
);

/* Model space: circles, the finished lever outline and its side view. */
const Model = () => (
  <ModelSpace>
    <defs>
      <pattern id="minor" x="720.5" y="287" width="14.520" height="14.520" patternUnits="userSpaceOnUse">
        <path d="M0 0H14.520M0 0V14.520" stroke="#272f3a" fill="none" />
      </pattern>
      <pattern id="major" x="720" y="286.600" width="72.600" height="72.600" patternUnits="userSpaceOnUse">
        <path d="M0 .5H72.600M.5 0V72.600" stroke="#323b45" fill="none" />
      </pattern>
    </defs>
    <rect width="100%" height="100%" fill="url(#minor)" />
    <rect width="100%" height="100%" fill="url(#major)" />
    <g transform="translate(0 -199)" fill="none" stroke="#e3e5e8">
      <path d="M720.500 199V440" stroke="#2d6b34" />
      <path d="M740 486.500H1275" stroke="#8c2326" />
      <circle cx="229.500" cy="424" r="93" />
      <circle cx="229.500" cy="424" r="46.500" />
      <circle cx="441" cy="302" r="46.700" />
      <circle cx="441" cy="302" r="23.300" />
      <circle cx="410" cy="432" r="87" />
      <path d="M401 362.500H429M435 362.500H464M432.500 331V359M432.500 365V394M429.500 359.500h5v5h-5z" />
      <path d="M749 494A93 93 0 0 1 717.300 416A209 209 0 0 1 1048.600 264.800A46.500 46.500 0 0 1 1068 302" />
      <circle cx="1021.500" cy="302" r="23" />
      <g stroke="#1a1ab8" strokeWidth="1.300">
        <path d="M908 297 992 250M992 250 1019 297" strokeDasharray="9 1" />
        <path d="M1040 286 1076 251h8" strokeDasharray="7 2" />
        <path d="M992 250l-8 2 2 3zM1040 286l2-6 4 4z" fill="#1a1ab8" />
        <path d="M1231 199v24M1256 199v24" strokeWidth="2" />
      </g>
      <text x="1082" y="255.500" fontFamily="Liberation Sans, sans-serif" fontSize="12" fill="#1a1ac8" stroke="#1a1ac8" strokeWidth=".6">Ø40</text>
      <path d="M1232.500 224.500h23.500v293h-23.500z" />
      <path d="M1233 279.500h9M1247 279.500h9M1233 325.500h9M1247 325.500h9M1233 378.500h9M1247 378.500h9M1233 470.500h9M1247 470.500h9" strokeWidth="1.500" />
      <path d="M1219 303.500h14M1237 303.500h13M1254 303.500h15M1219 424.500h14M1237 424.500h13M1254 424.500h15" strokeWidth="1.500" />
      <path d="M718 440h5v46h-5z" fill="#4d9a52" stroke="none" />
      <path d="M722 484h26v5h-26z" fill="#b5504c" stroke="none" />
      <path d="M720 429l4 4 4-4M724 433v5" stroke="#2d7a34" />
      <path d="M717.500 482.500h5v6h-5z" stroke="#5b86c8" />
    </g>
  </ModelSpace>
);

/* Dimensioned lever sheet that floats over model space. */
const Sheet = () => (
  <SheetPane>
    <svg width="388" height="270" viewBox="746 297 388 270" fill="none" stroke="#8d8d92" strokeWidth=".9">
      <circle cx="821.700" cy="477" r="29.300" />
      <circle cx="955.500" cy="399.300" r="14.700" />
      <path d="M972.800 375.600A29.300 29.300 0 0 1 948.500 427.700A55 55 0 0 0 880.300 479.100A58.700 58.700 0 0 1 821.700 535.700A58.700 58.700 0 0 1 763.300 471.700A132 132 0 0 1 972.800 375.600z" />
      <path d="M821.700 495V477L955.500 399.300" />
      <path d="M1089.500 306v229.500h15V306M1089.500 350.500h15M1089.500 384.500h6M1098 384.500h6.500M1089.500 414.500h6M1098 414.500h6.500M1089.500 447.500h6M1098 447.500h6.500M1089.500 506.500h6M1098 506.500h6.500" />
      <path d="M1081 399.500h9M1092 399.500h10M1104 399.500h9M1081 477h9M1092 477h10M1104 477h9" />
      <path d="M943 567q19-5 39 0z" fill="#a9a9a9" stroke="#999" />
      <path d="M894.500 483h1.500" stroke="#c9c9cf" />
      <g stroke="#8a8ab8">
        <path d="M821.700 477 803 443 862 409M877 400.500 938 366l17.500 33.300" />
        <path d="M809 342h4l14 24M993 366.500h-4l-22 21.500M1002 443h-4l-22-22M922 469h-4l-26-19M878 532h-4l-32-33M826 562h-4.300V537M1089.500 306.500h19" />
        <path d="M821.700 494.500q6 0 11-4M839 482q1-8-2-13" />
      </g>
      <path d="M803 443l5-1.400-1.500-2.400zM938 366l-5 1.400 1.500 2.400zM827 366.500l-3.600-4 2.600-1.400zM967 388l3-4.500 1.800 1.800zM976 421l4.500 3-2 2zM892 450l5 2-1.600 2.300zM842 499l4.500 3-2 2zM821.700 536.500l-1.400 5h2.800zM837 468l2.500 4.500-2.500.5zM822 495l4.500-2v2.500zM1090 306.500l4-1.300v2.600zM1104 306.500l-4-1.300v2.600z" fill="#2a2aa8" stroke="none" />
      <g fill="#1c1ca4" stroke="none" fontFamily="Liberation Sans, sans-serif" fontSize="8">
        <text x="789" y="345">R180</text>
        <text x="993" y="370">Ø40</text>
        <text x="1002" y="446">R40</text>
        <text x="922" y="472">R75</text>
        <text x="878" y="535">Ø80</text>
        <text x="826" y="565">R80</text>
        <text x="1109" y="309">20</text>
        <text x="828" y="489">120°</text>
        <text x="869.500" y="407.500" textAnchor="middle" transform="rotate(-30 869.500 404.500)">210</text>
      </g>
    </svg>
  </SheetPane>
);

const NavTools = () => (
  <>
    <NavCube>
      <svg width="88" height="92" viewBox="1175 207 88 92" fontFamily="Open Sans, sans-serif" fontWeight="700" textAnchor="middle">
        <circle cx="1219" cy="254" r="36" fill="none" stroke="#7d8088" strokeOpacity=".5" strokeWidth="6" />
        <path d="M1203 237h33v33h-33z" fill="#bdbdc0" fillOpacity=".85" />
        <path d="M1209 243h21v21h-21z" fill="#a5a8ac" />
        <text x="1219.500" y="257" fontSize="8" fill="#4a515a">TOP</text>
        <g fontSize="12" fill="#b9bbbf">
          <text x="1219.500" y="221">N</text>
          <text x="1219.500" y="296">S</text>
          <text x="1182.500" y="258">W</text>
          <text x="1256.500" y="258">E</text>
        </g>
      </svg>
    </NavCube>
    <UcsName>Unnamed<Caret w={7} c="#a4a4b2" /></UcsName>
    <NavBar>
      <svg width="30" height="200" viewBox="0 0 30 200" fill="none" stroke="#4c5158" strokeWidth="1.300">
        <circle cx="24.500" cy="5" r="3" /><path d="M23 5h3" />
        <circle cx="15" cy="28" r="10" /><circle cx="15" cy="28" r="5" /><path d="M5 18h10M5 18v10" />
        <path d="M8 76q-5-6-3-7t5 4V62q1-2 2 0v6l1-9q1-2 2 0v9l2-8q2-1 2 1l-1 8 3-5q2 0 1 2l-3 9q-2 5-6 5t-5-4" />
        <path d="M5 85l13 13M17 86 5 98M4 88v-4h4M14 84h4v4M4 95v4h4" /><circle cx="19" cy="99" r="4" /><path d="M22 102l4 4" />
        <ellipse cx="15" cy="132" rx="10" ry="4.500" /><path d="M15 121v17M12 124l3-3 3 3M8 133l3 3-3 3" />
        <path d="M5 159h5v5H5zM13 159h5v5h-5zM21 159h4v5h-4zM4 168h15v12H4z" /><path d="M9 171l5 3-5 3z" fill="#4c5158" />
        <circle cx="24.500" cy="194" r="3" />
        <path d="M13 47h4M13 114h4M13 149h4" />
      </svg>
    </NavBar>
  </>
);

const StatusBar = () => (
  <Status>
    <Group><Cell $w={45}>MODEL</Cell></Group>
    <Group>
      <Cell $w={22} aria-label="Grid"><Ico s={16}><path d="M3 2v12M6.500 2v12M10 2v12M13.500 2v12M2 4h13M2 7h13M2 10h13M2 13h13" stroke={blue} strokeWidth="1" /></Ico></Cell>
      <Cell $w={21} aria-label="Snap"><Ico s={16}><path d="M2 2.500h13M2 5h13M2 7.500h13M2 10h13M2 12.500h13" stroke="#b9b9b9" strokeDasharray=".1 2.400" strokeWidth="1.100" /></Ico></Cell>
      <Cell $w={16} aria-label="Snap list"><Caret /></Cell>
    </Group>
    <Group><Cell $w={22} aria-label="Dynamic input"><Ico><path d="M1 5h6M4 2v6" stroke={blue} strokeWidth="1.500" /><path d="M6.500 10h9v3.500h-9z" fill={blue} /></Ico></Cell></Group>
    <Group>
      <Cell $w={21} aria-label="Ortho"><Ico s={16}><path d="M3 2v11.500h11M3 10h3.500v3.500" stroke="#bdbdbd" strokeWidth="1.300" /></Ico></Cell>
      <Cell $w={22} aria-label="Polar"><Ico><circle cx="7.500" cy="8" r="5.500" stroke={blue} strokeWidth="1.500" /><path d="M7.500 8H15M7.500 8l4-4" stroke={blue} strokeWidth="1.500" /></Ico></Cell>
      <Cell $w={16} aria-label="Polar list"><Caret /></Cell>
      <Cell $w={20} aria-label="Isodraft"><Ico><path d="M1 2l14 12M8.500 1v14" stroke="#b0b0b0" strokeWidth="1.300" /></Ico></Cell>
      <Cell $w={15} aria-label="Isodraft list"><Caret /></Cell>
    </Group>
    <Group>
      <Cell $w={21} aria-label="Tracking"><Ico s={16}><path d="M1.500 13.500 14 2.500M1.500 13.500h13" stroke={blue} strokeWidth="1.500" /><path d="M7 7l2.500 2.500" stroke={blue} strokeWidth="2" /></Ico></Cell>
      <Cell $w={22} aria-label="Object snap"><Ico><path d="M4 4h10v10H4z" stroke={blue} strokeWidth="1.500" /><circle cx="3.500" cy="3.500" r="2.500" fill="#0a6a1e" /></Ico></Cell>
      <Cell $w={14} aria-label="Object snap list"><Caret /></Cell>
    </Group>
    <Group>
      <Cell $w={24} aria-label="Annotation visibility"><Ico><path d="M8 1l2.500 7 4.500 6-7-3-7 3 4.500-6z" fill={blue} /><circle cx="12" cy="4" r="2.300" stroke={blue} strokeWidth="1.500" /></Ico></Cell>
      <Cell $w={22} aria-label="Auto scale"><Ico s={16}><path d="M7.500 2 9.500 8l5 6-7-3-7 3 5-6z" fill="#c9c9c9" /><path d="M13 1l-3 4h3l-2 4" stroke="#c9c9c9" strokeWidth="1.400" /></Ico></Cell>
      <Cell $w={21} aria-label="Annotation scale"><Ico s={16}><path d="M8 1l2 7 5 6-7-3-7 3 5-6z" fill="#c9c9c9" /></Ico></Cell>
      <Cell $w={32}>1:1<Caret /></Cell>
    </Group>
    <Group>
      <Cell $w={22} aria-label="Workspace"><Ico s={16}><circle cx="8" cy="8" r="3.600" stroke="#c4c4c4" strokeWidth="3" /><path d="M8 1.500v2M8 12.500v2M1.500 8h2M12.500 8h2M3.500 3.500l1 1M11.500 11.500l1 1M12.500 3.500l-1 1M4.500 11.500l-1 1" stroke="#c4c4c4" strokeWidth="2" /></Ico></Cell>
      <Cell $w={14} aria-label="Workspace list"><Caret /></Cell>
    </Group>
    <Group><Cell $w={22} aria-label="Annotation monitor"><Ico><path d="M8 2v12M2 8h12" stroke="#c4c4c4" strokeWidth="1.600" /></Ico></Cell></Group>
    <Group>
      <Cell $w={22} aria-label="Units"><Ico><path d="M5 2h5v12H5z" fill="#c9c9c9" /><path d="M5 5h2M5 8h2M5 11h2" stroke="#555" /></Ico></Cell>
      <Cell $w={51}>Decimal</Cell>
      <Cell $w={19} aria-label="Units list"><Caret /></Cell>
    </Group>
    <Group><Cell $w={21} aria-label="Quick properties"><Ico s={16}><path d="M4 3h8v10H4z" stroke={blue} strokeWidth="1.500" fill="#25507f" /><path d="M6 6h4M6 8.500h4M6 11h4" stroke={blue} /></Ico></Cell></Group>
    <Group>
      <Cell $w={20} aria-label="Lock interface"><Ico><path d="M6 12H1.500V3h12v3M1.500 5.500h12" stroke="#c4c4c4" strokeWidth="1.300" /><path d="M8 9h6v5.500H8z" fill="#c4c4c4" /><path d="M12 9V7.500q2-2 3 1" stroke="#c4c4c4" strokeWidth="1.200" /></Ico></Cell>
      <Cell $w={16} aria-label="Lock list"><Caret /></Cell>
    </Group>
    <Group><Cell $w={21} aria-label="Isolate objects"><Ico><path d="M2 2h5v5H2zM8 9l3.500 5.500h-7z" stroke="#c4c4c4" strokeWidth="1.300" /><circle cx="12" cy="6.500" r="2.700" stroke="#c4c4c4" strokeWidth="1.300" /></Ico></Cell></Group>
    <Group><Cell $w={22} aria-label="Graphics performance"><Ico><circle cx="8" cy="8" r="7" fill="#0a5cb8" stroke="#1f7ad8" strokeWidth="1.200" /><path d="M8 9.500l3-2.500" stroke="#6fb0f5" strokeWidth="1.300" /></Ico></Cell></Group>
    <Group><Cell $w={21} aria-label="Autodesk tray"><Ico><path d="M2 3l6-2 2 6H3z" fill="#e8eef5" stroke="#4f90e0" /><path d="M2 9h6v4H2z" fill="#f2d33a" /><path d="M7 9.500l3 4 5-5" stroke="#4fae2b" strokeWidth="2.200" /></Ico></Cell></Group>
    <Group>
      <Cell $w={22} aria-label="Clean screen"><Ico s={16}><path d="M1 2.500h14v11H1z" stroke="#d8d8d8" strokeWidth="1.200" /><path d="M9 7l3-2.500M12.500 7V4.500H10M7 9l-3 2.500M3.500 9v2.500H6" stroke="#eee" strokeWidth="1.300" /></Ico></Cell>
      <Cell $w={20} aria-label="Customization"><Ico s={16}><path d="M1 3.500h14M1 8h14M1 12.500h14" stroke="#c4c4c4" strokeWidth="1.500" /></Ico></Cell>
    </Group>
  </Status>
);

export default function App() {
  return (
    <Frame>
      <Global />
      <TitleArea />
      <TabRow>
        <RibbonTab $w={50} $active>Home</RibbonTab>
        {tabs.map(([t, w], i) => <RibbonTab key={t + i} $w={w + 19}>{t}</RibbonTab>)}
        <Cell $w={62} aria-label="Minimize ribbon">
          <svg width="24" height="8" viewBox="0 0 24 8"><rect width="13" height="7" rx="2" fill="#e8e8e8" /><path d="M4 5h5L6.500 2.500z" fill="#333" /><path d="M17 2.500h5L19.500 5.500z" fill="#e8e8e8" /></svg>
        </Cell>
      </TabRow>
      <RibbonArea />
      <DocTabs>
        <DocTab>Start</DocTab>
        <DocTab $active>12*<svg width="7" height="7" stroke="#404040" strokeWidth="1.500"><path d="M0 0l7 7M7 0 0 7" /></svg></DocTab>
        <AddDoc aria-label="New drawing"><svg width="9" height="9" stroke="#d5d5d5" strokeWidth="2"><path d="M4.500 0v9M0 4.500h9" /></svg></AddDoc>
      </DocTabs>
      <Canvas>
        <Model />
        <Scroll />
        <ViewLabel>[−][Top][Conceptual]</ViewLabel>
        <NavTools />
        <Sheet />
        <History>
          <Line $tone="#b4b6b8">Specify point on object for first tangent of circle:</Line>
          <Line $tone="#cfd1d2">Specify point on object for second tangent of circle:</Line>
          <Line $tone="#f4f4f4">Specify radius of circle &lt;40.0000&gt;: 75</Line>
        </History>
        <CommandBar>
          <Cell $w={8} aria-label="Move"><svg width="6" height="18"><path d="M1 0v18M4.500 0v18" stroke="#b4b4b4" strokeDasharray="1.500 1.500" strokeWidth="1.500" /></svg></Cell>
          <Cell $w={20} aria-label="Close command line"><svg width="8" height="8" stroke="#d8d8d8" strokeWidth="1.800"><path d="M0 0l8 8M8 0 0 8" /></svg></Cell>
          <Cell $w={22} aria-label="Customize command line"><Ico s={16}><path d="M6 6l8 8" stroke="#d2d2d2" strokeWidth="3" /><path d="M2 3.500l2 2 2-1 .5-2.500A4 4 0 0 1 7 8 4 4 0 0 1 2 3.500z" fill="#d2d2d2" stroke="#d2d2d2" /></Ico></Cell>
          <CommandField>
            <svg width="14" height="14" viewBox="0 0 14 14"><rect x=".5" y=".5" width="13" height="13" rx="1" fill="#a5adb9" stroke="#7c8490" /><path d="M3 4l3 3-3 3M7.500 10H11" stroke="#333a44" strokeWidth="1.200" fill="none" /></svg>
            <Caret w={5} c="#5c5e62" />
            <CommandInput placeholder="Type a command" aria-label="Command" />
            <Caret c="#1c1c1c" up />
          </CommandField>
        </CommandBar>
      </Canvas>
      <Bottom>
        <LayoutTabs>
          <LayoutTab $w={58} $active>Model</LayoutTab>
          <LayoutTab $w={87}>Présentation1</LayoutTab>
          <LayoutTab $w={91}>Présentation2</LayoutTab>
          <LayoutTab $w={27} aria-label="New layout">
            <svg width="27" height="9" viewBox="-9 0 27 9" stroke="#dadada" strokeWidth="1.800"><path d="M4.500 0v9M0 4.500h9" /></svg>
          </LayoutTab>
        </LayoutTabs>
        <StatusBar />
      </Bottom>
    </Frame>
  );
}
